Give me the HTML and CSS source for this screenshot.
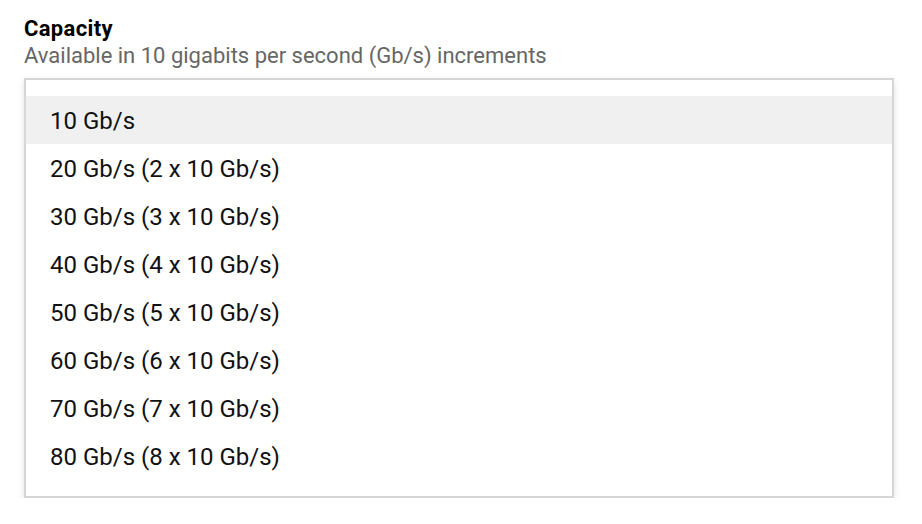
FILE: index.html
```html
<!DOCTYPE html>
<html>
<head>
<meta charset="utf-8">
<link rel="stylesheet" href="styles.css">
</head>
<body>
<div class="field">
  <div class="label">Capacity</div>
  <div class="hint">Available in 10 gigabits per second (Gb/s) increments</div>
  <ul class="list">
    <li class="opt active">10 Gb/s</li>
    <li class="opt">20 Gb/s (2 x 10 Gb/s)</li>
    <li class="opt">30 Gb/s (3 x 10 Gb/s)</li>
    <li class="opt">40 Gb/s (4 x 10 Gb/s)</li>
    <li class="opt">50 Gb/s (5 x 10 Gb/s)</li>
    <li class="opt">60 Gb/s (6 x 10 Gb/s)</li>
    <li class="opt">70 Gb/s (7 x 10 Gb/s)</li>
    <li class="opt">80 Gb/s (8 x 10 Gb/s)</li>
  </ul>
</div>
</body>
</html>
```
FILE: styles.css
```css
html, body {
  margin: 0;
  padding: 0;
  background: #fff;
}
body {
  font-family: Roboto, "Liberation Sans", sans-serif;
  color: #000;
}
.field {
  padding: 15px 28px 0 24px;
}
.label {
  font-size: 22px;
  font-weight: 700;
  line-height: 27px;
  letter-spacing: 0.35px;
  color: #000;
}
.hint {
  font-size: 22px;
  line-height: 27px;
  color: #666;
  margin-bottom: 9px;
}
.list {
  list-style: none;
  margin: 0;
  padding: 16px 0;
  border: 2px solid #d6d6d6;
  box-shadow: 0 2px 6px rgba(0,0,0,0.12);
  width: 866px;
  box-sizing: content-box;
}
.opt {
  height: 46px;
  line-height: 46px;
  padding: 2px 24px 0;
  font-size: 24px;
  color: #111;
}
.opt.active {
  background: #f0f0f0;
}
```
